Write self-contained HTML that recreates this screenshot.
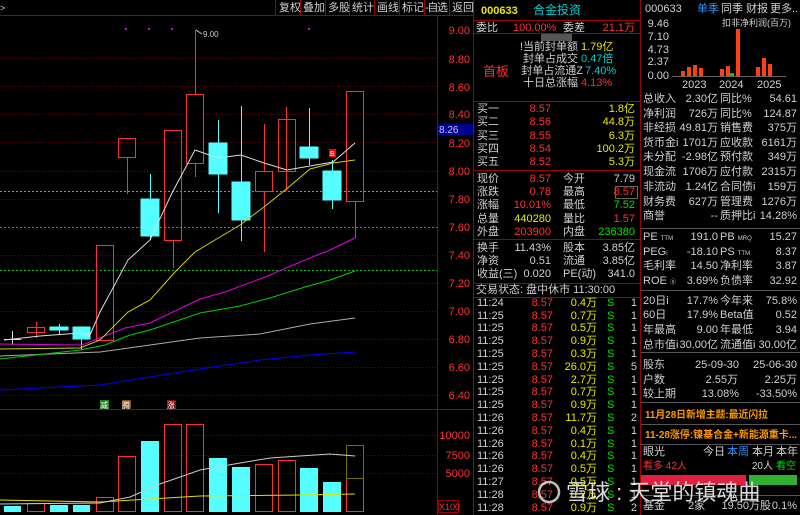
<!DOCTYPE html><html><head><meta charset="utf-8"><style>
body{margin:0;background:#000;width:800px;height:515px;overflow:hidden}
svg{display:block}
text{font-family:"Liberation Sans","Noto Sans CJK SC",sans-serif;font-size:11px}
.w{fill:#d0d0d0}.r{fill:#ff3030}.y{fill:#e8e800}.g{fill:#00e000}.c{fill:#00d0d0}.o{fill:#ff9900}
.e{text-anchor:end}
</style></head><body>
<svg width="800" height="515" viewBox="0 0 800 515">
<g stroke="#a00000" fill="none">
<line x1="0" y1="15.5" x2="474" y2="15.5"/>
<line x1="437.5" y1="15" x2="437.5" y2="515"/>
<line x1="473.5" y1="0" x2="473.5" y2="515"/>
<line x1="640.5" y1="0" x2="640.5" y2="515"/>
<line x1="0" y1="409.5" x2="474" y2="409.5"/>
<line x1="474" y1="20.5" x2="640" y2="20.5"/>
<line x1="474" y1="33.5" x2="640" y2="33.5"/>
<line x1="474" y1="101.5" x2="640" y2="101.5"/>
<line x1="474" y1="170.5" x2="640" y2="170.5"/>
<line x1="474" y1="239.5" x2="640" y2="239.5"/>
<line x1="474" y1="283.5" x2="640" y2="283.5"/>
<line x1="474" y1="297.5" x2="640" y2="297.5"/>
</g>
<g stroke="#a00000"><line x1="275.5" y1="0" x2="275.5" y2="15"/><line x1="300.5" y1="0" x2="300.5" y2="15"/><line x1="325.5" y1="0" x2="325.5" y2="15"/><line x1="349.5" y1="0" x2="349.5" y2="15"/><line x1="374.5" y1="0" x2="374.5" y2="15"/><line x1="399.5" y1="0" x2="399.5" y2="15"/><line x1="424.5" y1="0" x2="424.5" y2="15"/><line x1="449.5" y1="0" x2="449.5" y2="15"/></g>
<g class="w" style="font-size:10px"><text x="279" y="11">复权</text><text x="303" y="11">叠加</text><text x="328" y="11">多股</text><text x="352" y="11">统计</text><text x="377" y="11">画线</text><text x="402" y="11">标记</text><text x="425" y="11" textLength="23">-自选</text><text x="452" y="11">返回</text></g>
<text x="0" y="11" class="w" style="font-size:9px">&gt;</text>
<g stroke="#7a0000" stroke-dasharray="1,2">
<line x1="0" y1="58.5" x2="437" y2="58.5"/><line x1="0" y1="86.5" x2="437" y2="86.5"/><line x1="0" y1="114.5" x2="437" y2="114.5"/><line x1="0" y1="142.5" x2="437" y2="142.5"/><line x1="0" y1="171.5" x2="437" y2="171.5"/><line x1="0" y1="199.5" x2="437" y2="199.5"/><line x1="0" y1="255.5" x2="437" y2="255.5"/><line x1="0" y1="283.5" x2="437" y2="283.5"/><line x1="0" y1="311.5" x2="437" y2="311.5"/><line x1="0" y1="339.5" x2="437" y2="339.5"/><line x1="0" y1="367.5" x2="437" y2="367.5"/><line x1="0" y1="395.5" x2="437" y2="395.5"/>
<line x1="0" y1="435.5" x2="437" y2="435.5"/><line x1="0" y1="455.5" x2="437" y2="455.5"/><line x1="0" y1="473.5" x2="437" y2="473.5"/>
</g>
<line x1="0" y1="191.5" x2="437" y2="191.5" stroke="#e08000" stroke-dasharray="2,2"/>
<line x1="0" y1="227.5" x2="437" y2="227.5" stroke="#3090d0" stroke-dasharray="2,2"/>
<line x1="0" y1="270.5" x2="437" y2="270.5" stroke="#00c000" stroke-dasharray="2,2"/>
<g class="r e" style="font-size:10px"><text x="470" y="34">9.00</text><text x="470" y="63">8.80</text><text x="470" y="91">8.60</text><text x="470" y="118">8.40</text><text x="470" y="147">8.20</text><text x="470" y="175">8.00</text><text x="470" y="203">7.80</text><text x="470" y="231">7.60</text><text x="470" y="259">7.40</text><text x="470" y="287">7.20</text><text x="470" y="315">7.00</text><text x="470" y="343">6.80</text><text x="470" y="371">6.60</text><text x="470" y="399">6.40</text>
<text x="470" y="439">10000</text><text x="470" y="459">7500</text><text x="470" y="477">5000</text></g>
<rect x="438" y="124" width="35" height="11" fill="#000090"/><text x="439" y="133" fill="#c8c8ff" style="font-size:10px">8.26</text>
<rect x="438.5" y="500.5" width="20" height="12" fill="none" stroke="#a00000"/><text x="439" y="510" class="r" style="font-size:9px">X100</text>
<g fill="#e000e0"><rect x="125" y="28" width="2" height="2"/><rect x="148" y="28" width="2" height="2"/><rect x="171" y="28" width="2" height="2"/><rect x="308" y="28" width="2" height="2"/></g>
<text x="203" y="37" class="w" style="font-size:8px">9.00</text><path d="M196 30 L202 34" stroke="#ccc"/>
<g stroke="#ff3030" fill="none">
<line x1="355.5" y1="201" x2="355.5" y2="238"/><rect x="346.5" y="91.5" width="17" height="110"/>
<line x1="286.5" y1="107" x2="286.5" y2="191"/><rect x="278.5" y="119.5" width="17" height="52"/>
<line x1="264.5" y1="124" x2="264.5" y2="252"/><rect x="255.5" y="171.5" width="17" height="20" fill="#000"/>
<line x1="195.5" y1="30" x2="195.5" y2="177"/><rect x="186.5" y="94.5" width="17" height="69" fill="#000"/>
<line x1="173.5" y1="240" x2="173.5" y2="268"/><rect x="164.5" y="130.5" width="17" height="110"/>
<line x1="127.5" y1="157" x2="127.5" y2="194"/><rect x="118.5" y="138.5" width="17" height="19"/>
<rect x="96.5" y="245.5" width="17" height="95"/>
<rect x="27.5" y="327.5" width="17" height="5"/><line x1="36.5" y1="322" x2="36.5" y2="338"/>
</g>
<g fill="#5ff" stroke="#5ff">
<line x1="332.5" y1="160" x2="332.5" y2="209"/><rect x="323" y="171" width="18" height="29"/>
<line x1="309.5" y1="108" x2="309.5" y2="165"/><rect x="300" y="147" width="18" height="11"/>
<line x1="241.5" y1="106" x2="241.5" y2="241"/><rect x="232" y="182" width="18" height="38"/>
<line x1="218.5" y1="120" x2="218.5" y2="213"/><rect x="209" y="143" width="18" height="31"/>
<line x1="150.5" y1="174" x2="150.5" y2="240"/><rect x="141" y="199" width="18" height="37"/>
<line x1="81.5" y1="339" x2="81.5" y2="350"/><rect x="73" y="327" width="17" height="12"/>
<line x1="59.5" y1="324" x2="59.5" y2="335"/><rect x="50" y="327" width="18" height="3"/>
</g>
<path d="M4 339.5H21M12.5 331V345" stroke="#ddd"/>
<rect x="329" y="149" width="7" height="8" fill="#f00"/><text x="330" y="156" fill="#fff" style="font-size:7px">B</text>
<g fill="none" stroke-width="1">
<polyline stroke="#0000ff" points="0,390 100,385 150,377 200,369 260,360 310,355 355,352"/>
<polyline stroke="#aaa" points="0,356 100,352 150,345 200,338 260,334 310,324 355,318"/>
<polyline stroke="#00d000" points="0,359 80,350 105,345 130,335 150,330 200,313 240,306 270,298 305,287 330,280 355,271"/>
<polyline stroke="#e000e0" points="0,344 82,345 125,328 150,323 200,299 225,292 265,277 305,260 330,250 355,238"/>
<polyline stroke="#d0d000" points="0,349 80,348 100,340 128,312 150,300 175,272 195,252 240,225 264,207 290,186 310,169 333,163 355,160"/>
<polyline stroke="#ddd" points="4,340 40,336 80,333 90,335 100,312 128,260 150,240 172,193 195,150 218,158 241,155 264,163 287,170 310,166 333,162 355,143"/>
</g>
<rect x="100" y="400" width="9" height="9" fill="#208020"/><text x="100" y="408" fill="#fff" style="font-size:8px">减</text>
<rect x="122" y="400" width="9" height="9" fill="#805020"/><text x="122" y="408" fill="#fff" style="font-size:8px">腾</text>
<rect x="167" y="400" width="9" height="9" fill="#801010"/><text x="167" y="408" fill="#fff" style="font-size:8px">涨</text>
<g fill="#5ff"><rect x="4" y="506" width="17" height="6"/><rect x="50" y="505" width="18" height="7"/><rect x="73" y="505" width="17" height="7"/><rect x="141" y="441" width="18" height="71"/><rect x="209" y="458" width="18" height="54"/><rect x="232" y="467" width="18" height="45"/><rect x="300" y="468" width="18" height="44"/><rect x="323" y="482" width="18" height="30"/></g>
<g fill="none" stroke="#ff3030"><rect x="27.5" y="503.5" width="17" height="8"/><rect x="96.5" y="497.5" width="17" height="14"/><rect x="118.5" y="456.5" width="17" height="55"/><rect x="164.5" y="424.5" width="17" height="87"/><rect x="186.5" y="424.5" width="17" height="87"/><rect x="255.5" y="464.5" width="17" height="47"/><rect x="278.5" y="460.5" width="17" height="51"/><rect x="346.5" y="478.5" width="17" height="33"/></g>
<rect x="346.5" y="445.5" width="17" height="33" fill="none" stroke="#707000"/>
<polyline fill="none" stroke="#ccc" points="0,504 100,503 130,497 160,484 200,470 240,463 270,458 300,456 330,454 355,456"/>
<polyline fill="none" stroke="#e0e000" points="0,500 100,502 150,499 200,496 300,495 355,494"/>
<text x="481" y="14" class="y" style="font-weight:bold">000633</text><text x="533" y="14" class="c" style="font-size:12px">合金投资</text>
<text x="476" y="31" class="w">委比</text><text x="513" y="31" class="r">100.00%</text><text x="563" y="31" class="w">委差</text><text x="635" y="31" class="r e">21.1万</text>
<rect x="541" y="34" width="31" height="7" fill="#555"/>
<g style="font-size:9px"><text x="578" y="50" class="w e">!当前封单额</text><text x="581" y="50" class="y">1.79亿</text>
<text x="578" y="62" class="w e">封单占成交</text><text x="581" y="62" class="c">0.47倍</text>
<text x="583" y="74" class="w e">封单占流通Z</text><text x="585" y="74" class="c">7.40%</text>
<text x="578" y="86" class="w e">十日总涨幅</text><text x="581" y="86" class="r">4.13%</text></g>
<text x="483" y="76" class="r" style="font-size:13px">首板</text>
<g><text x="477" y="112" class="w">买一</text><text x="551" y="112" class="r e">8.57</text><text x="635" y="112" class="y e">1.8亿</text>
<text x="477" y="125" class="w">买二</text><text x="551" y="125" class="r e">8.56</text><text x="635" y="125" class="y e">44.8万</text>
<text x="477" y="139" class="w">买三</text><text x="551" y="139" class="r e">8.55</text><text x="635" y="139" class="y e">6.3万</text>
<text x="477" y="152" class="w">买四</text><text x="551" y="152" class="r e">8.54</text><text x="635" y="152" class="y e">100.2万</text>
<text x="477" y="165" class="w">买五</text><text x="551" y="165" class="r e">8.52</text><text x="635" y="165" class="y e">5.3万</text>
<text x="477" y="182" class="w">现价</text><text x="551" y="182" class="r e">8.57</text><text x="563" y="182" class="w">今开</text><text x="635" y="182" class="w e">7.79</text>
<text x="477" y="195" class="w">涨跌</text><text x="551" y="195" class="r e">0.78</text><text x="563" y="195" class="w">最高</text><text x="635" y="195" class="r e">8.57</text>
<rect x="615.5" y="186.5" width="22" height="12" fill="none" stroke="#666"/>
<text x="477" y="208" class="w">涨幅</text><text x="551" y="208" class="r e">10.01%</text><text x="563" y="208" class="w">最低</text><text x="635" y="208" class="g e">7.52</text>
<text x="477" y="222" class="w">总量</text><text x="551" y="222" class="y e">440280</text><text x="563" y="222" class="w">量比</text><text x="635" y="222" class="r e">1.57</text>
<text x="477" y="235" class="w">外盘</text><text x="551" y="235" class="r e">203900</text><text x="563" y="235" class="w">内盘</text><text x="635" y="235" class="g e">236380</text>
<text x="477" y="251" class="w">换手</text><text x="551" y="251" class="w e">11.43%</text><text x="563" y="251" class="w">股本</text><text x="635" y="251" class="w e">3.85亿</text>
<text x="477" y="264" class="w">净资</text><text x="551" y="264" class="w e">0.51</text><text x="563" y="264" class="w">流通</text><text x="635" y="264" class="w e">3.85亿</text>
<text x="477" y="277" class="w">收益(三)</text><text x="551" y="277" class="w e">0.020</text><text x="563" y="277" class="w">PE(动)</text><text x="635" y="277" class="w e">341.0</text>
<text x="476" y="293" class="w">交易状态: 盘中休市 11:30:00</text></g>
<g>
<text x="477" y="306" class="w">11:24</text><text x="553" y="306" class="r e">8.57</text><text x="597" y="306" class="y e">0.4万</text><text x="607" y="306" class="g">S</text><text x="637" y="306" class="w e">1</text>
<text x="477" y="319" class="w">11:25</text><text x="553" y="319" class="r e">8.57</text><text x="597" y="319" class="y e">0.7万</text><text x="607" y="319" class="g">S</text><text x="637" y="319" class="w e">1</text>
<text x="477" y="331" class="w">11:25</text><text x="553" y="331" class="r e">8.57</text><text x="597" y="331" class="y e">0.5万</text><text x="607" y="331" class="g">S</text><text x="637" y="331" class="w e">1</text>
<text x="477" y="344" class="w">11:25</text><text x="553" y="344" class="r e">8.57</text><text x="597" y="344" class="y e">0.9万</text><text x="607" y="344" class="g">S</text><text x="637" y="344" class="w e">1</text>
<text x="477" y="357" class="w">11:25</text><text x="553" y="357" class="r e">8.57</text><text x="597" y="357" class="y e">0.3万</text><text x="607" y="357" class="g">S</text><text x="637" y="357" class="w e">1</text>
<text x="477" y="370" class="w">11:25</text><text x="553" y="370" class="r e">8.57</text><text x="597" y="370" class="y e">26.0万</text><text x="607" y="370" class="g">S</text><text x="637" y="370" class="w e">5</text>
<text x="477" y="383" class="w">11:25</text><text x="553" y="383" class="r e">8.57</text><text x="597" y="383" class="y e">2.7万</text><text x="607" y="383" class="g">S</text><text x="637" y="383" class="w e">1</text>
<text x="477" y="395" class="w">11:25</text><text x="553" y="395" class="r e">8.57</text><text x="597" y="395" class="y e">0.7万</text><text x="607" y="395" class="g">S</text><text x="637" y="395" class="w e">1</text>
<text x="477" y="408" class="w">11:25</text><text x="553" y="408" class="r e">8.57</text><text x="597" y="408" class="y e">0.9万</text><text x="607" y="408" class="g">S</text><text x="637" y="408" class="w e">1</text>
<text x="477" y="421" class="w">11:26</text><text x="553" y="421" class="r e">8.57</text><text x="597" y="421" class="y e">11.7万</text><text x="607" y="421" class="g">S</text><text x="637" y="421" class="w e">2</text>
<text x="477" y="434" class="w">11:26</text><text x="553" y="434" class="r e">8.57</text><text x="597" y="434" class="y e">0.4万</text><text x="607" y="434" class="g">S</text><text x="637" y="434" class="w e">1</text>
<text x="477" y="447" class="w">11:26</text><text x="553" y="447" class="r e">8.57</text><text x="597" y="447" class="y e">0.1万</text><text x="607" y="447" class="g">S</text><text x="637" y="447" class="w e">1</text>
<text x="477" y="459" class="w">11:26</text><text x="553" y="459" class="r e">8.57</text><text x="597" y="459" class="y e">0.4万</text><text x="607" y="459" class="g">S</text><text x="637" y="459" class="w e">1</text>
<text x="477" y="472" class="w">11:26</text><text x="553" y="472" class="r e">8.57</text><text x="597" y="472" class="y e">0.5万</text><text x="607" y="472" class="g">S</text><text x="637" y="472" class="w e">1</text>
<text x="477" y="485" class="w">11:27</text><text x="553" y="485" class="r e">8.57</text><text x="597" y="485" class="y e">0.5万</text><text x="607" y="485" class="g">S</text><text x="637" y="485" class="w e">1</text>
<text x="477" y="498" class="w">11:28</text><text x="553" y="498" class="r e">8.57</text><text x="597" y="498" class="y e">0.2万</text><text x="607" y="498" class="g">S</text><text x="637" y="498" class="w e">1</text>
<text x="477" y="511" class="w">11:28</text><text x="553" y="511" class="r e">8.57</text><text x="597" y="511" class="y e">0.9万</text><text x="607" y="511" class="g">S</text><text x="637" y="511" class="w e">2</text>
</g>
<text x="645" y="12" class="w">000633</text><text x="697" y="12" fill="#3090ff">单季</text><text x="721" y="12" class="w">同季</text><text x="746" y="12" class="w">财报</text><text x="770" y="12" class="w">更多..</text>
<g class="w e" style="font-size:8px"><text x="669" y="27">9.46</text><text x="669" y="40">7.10</text><text x="669" y="53">4.73</text><text x="669" y="65">2.37</text><text x="669" y="79">0.00</text></g>
<text x="722" y="26" class="w" style="font-size:9px">扣非净利润(百万)</text>
<line x1="672" y1="76.5" x2="786" y2="76.5" stroke="#666"/>
<g fill="#ff4010"><rect x="681" y="71" width="4" height="5"/><rect x="687" y="67" width="4" height="9"/><rect x="693" y="65" width="4" height="11"/><rect x="699" y="68" width="4" height="8"/><rect x="720" y="69" width="4" height="7"/><rect x="726" y="66" width="4" height="10"/><rect x="736" y="29" width="4" height="47"/><rect x="756" y="67" width="4" height="9"/><rect x="762" y="58" width="4" height="18"/><rect x="768" y="64" width="4" height="12"/></g>
<rect x="730" y="73" width="4" height="3" fill="#0c0"/>
<g class="w" style="font-size:9px"><text x="682" y="88">2023</text><text x="719" y="88">2024</text><text x="757" y="88">2025</text></g>
<g class="w">
<text x="643" y="102">总收入</text><text x="718" y="102" class="e">2.30亿</text><text x="720" y="102">同比%</text><text x="797" y="102" class="e">54.61</text>
<text x="643" y="117">净利润</text><text x="718" y="117" class="e">726万</text><text x="720" y="117">同比%</text><text x="797" y="117" class="e">124.87</text>
<text x="643" y="131">非经损</text><text x="718" y="131" class="e">49.81万</text><text x="720" y="131">销售费</text><text x="797" y="131" class="e">375万</text>
<text x="643" y="146">货币金i</text><text x="718" y="146" class="e">1701万</text><text x="720" y="146">应收款</text><text x="797" y="146" class="e">6161万</text>
<text x="643" y="160">未分配</text><text x="718" y="160" class="e">-2.98亿</text><text x="720" y="160">预付款</text><text x="797" y="160" class="e">349万</text>
<text x="643" y="175">现金流</text><text x="718" y="175" class="e">1706万</text><text x="720" y="175">应付款</text><text x="797" y="175" class="e">2315万</text>
<text x="643" y="190">非流动</text><text x="718" y="190" class="e">1.24亿</text><text x="720" y="190">合同债i</text><text x="797" y="190" class="e">159万</text>
<text x="643" y="205">财务费</text><text x="718" y="205" class="e">627万</text><text x="720" y="205">管理费</text><text x="797" y="205" class="e">1276万</text>
<text x="643" y="219">商誉</text><text x="718" y="219" class="e">--</text><text x="720" y="219">质押比i</text><text x="797" y="219" class="e">14.28%</text>
<text x="643" y="240">PE <tspan style="font-size:6px">TTM</tspan></text><text x="718" y="240" class="e">191.0</text><text x="720" y="240">PB <tspan style="font-size:6px">MRQ</tspan></text><text x="797" y="240" class="e">15.27</text>
<text x="643" y="255">PEG<tspan style="font-size:6px">i</tspan></text><text x="718" y="255" class="e">-18.10</text><text x="720" y="255">PS <tspan style="font-size:6px">TTM</tspan></text><text x="797" y="255" class="e">8.37</text>
<text x="643" y="269">毛利率</text><text x="718" y="269" class="e">14.50</text><text x="720" y="269">净利率</text><text x="797" y="269" class="e">3.87</text>
<text x="643" y="284">ROE <tspan style="font-size:6px">⑤</tspan></text><text x="718" y="284" class="e">3.69%</text><text x="720" y="284">负债率</text><text x="797" y="284" class="e">32.92</text>
<text x="643" y="304">20日i</text><text x="718" y="304" class="e">17.7%</text><text x="720" y="304">今年来</text><text x="797" y="304" class="e">75.8%</text>
<text x="643" y="318">60日</text><text x="718" y="318" class="e">17.9%</text><text x="720" y="318">Beta值</text><text x="797" y="318" class="e">0.52</text>
<text x="643" y="333">年最高</text><text x="718" y="333" class="e">9.00</text><text x="720" y="333">年最低</text><text x="797" y="333" class="e">3.94</text>
<text x="643" y="348">总市值i</text><text x="718" y="348" class="e">30.00亿</text><text x="720" y="348">流通值i</text><text x="797" y="348" class="e">30.00亿</text>
<text x="643" y="368">股东</text><text x="739" y="368" class="e">25-09-30</text><text x="797" y="368" class="e">25-06-30</text>
<text x="643" y="383">户数</text><text x="738" y="383" class="e">2.55万</text><text x="797" y="383" class="e">2.25万</text>
<text x="643" y="397">较上期</text><text x="739" y="397" class="e">13.08%</text><text x="797" y="397" class="e">-33.50%</text>
<text x="643" y="455">眼光</text><text x="703" y="455">今日</text><text x="752" y="455">本月</text><text x="776" y="455">本年</text>
<text x="643" y="509">基金</text><text x="688" y="509">2家</text><text x="771" y="509" class="e">19.50万股</text><text x="797" y="509" class="e">0.1%</text>
</g>
<text x="727" y="455" fill="#3090ff">本周</text>
<g stroke="#555"><line x1="641" y1="228.5" x2="800" y2="228.5"/><line x1="641" y1="290.5" x2="800" y2="290.5"/><line x1="641" y1="352.5" x2="800" y2="352.5"/><line x1="641" y1="402.5" x2="800" y2="402.5"/><line x1="641" y1="424.5" x2="800" y2="424.5"/><line x1="641" y1="444.5" x2="800" y2="444.5"/><line x1="641" y1="495.5" x2="800" y2="495.5"/></g>
<text x="645" y="418" class="o" style="font-weight:bold;font-size:10px" textLength="123" lengthAdjust="spacingAndGlyphs">11月28日新增主题:最近闪拉</text>
<text x="645" y="438" class="o" style="font-weight:bold;font-size:10px" textLength="152" lengthAdjust="spacingAndGlyphs">11-28涨停:镍基合金+新能源重卡...</text>
<text x="643" y="469" class="r" style="font-size:10px">看多 42人</text><text x="773" y="469" class="w e" style="font-size:10px">20人</text><text x="776" y="469" class="g" style="font-size:10px">看空</text>
<rect x="641" y="475" width="105" height="10" fill="#e02040"/><rect x="749" y="475" width="48" height="10" fill="#30b030"/>
<circle cx="549" cy="492" r="10" fill="none" stroke="#fff" stroke-opacity="0.75" stroke-width="2.5"/>
<text x="566" y="500" fill="#fff" fill-opacity="0.85" style="font-size:22px">雪球 : 天堂的镇魂曲</text>
</svg>
</body></html>
